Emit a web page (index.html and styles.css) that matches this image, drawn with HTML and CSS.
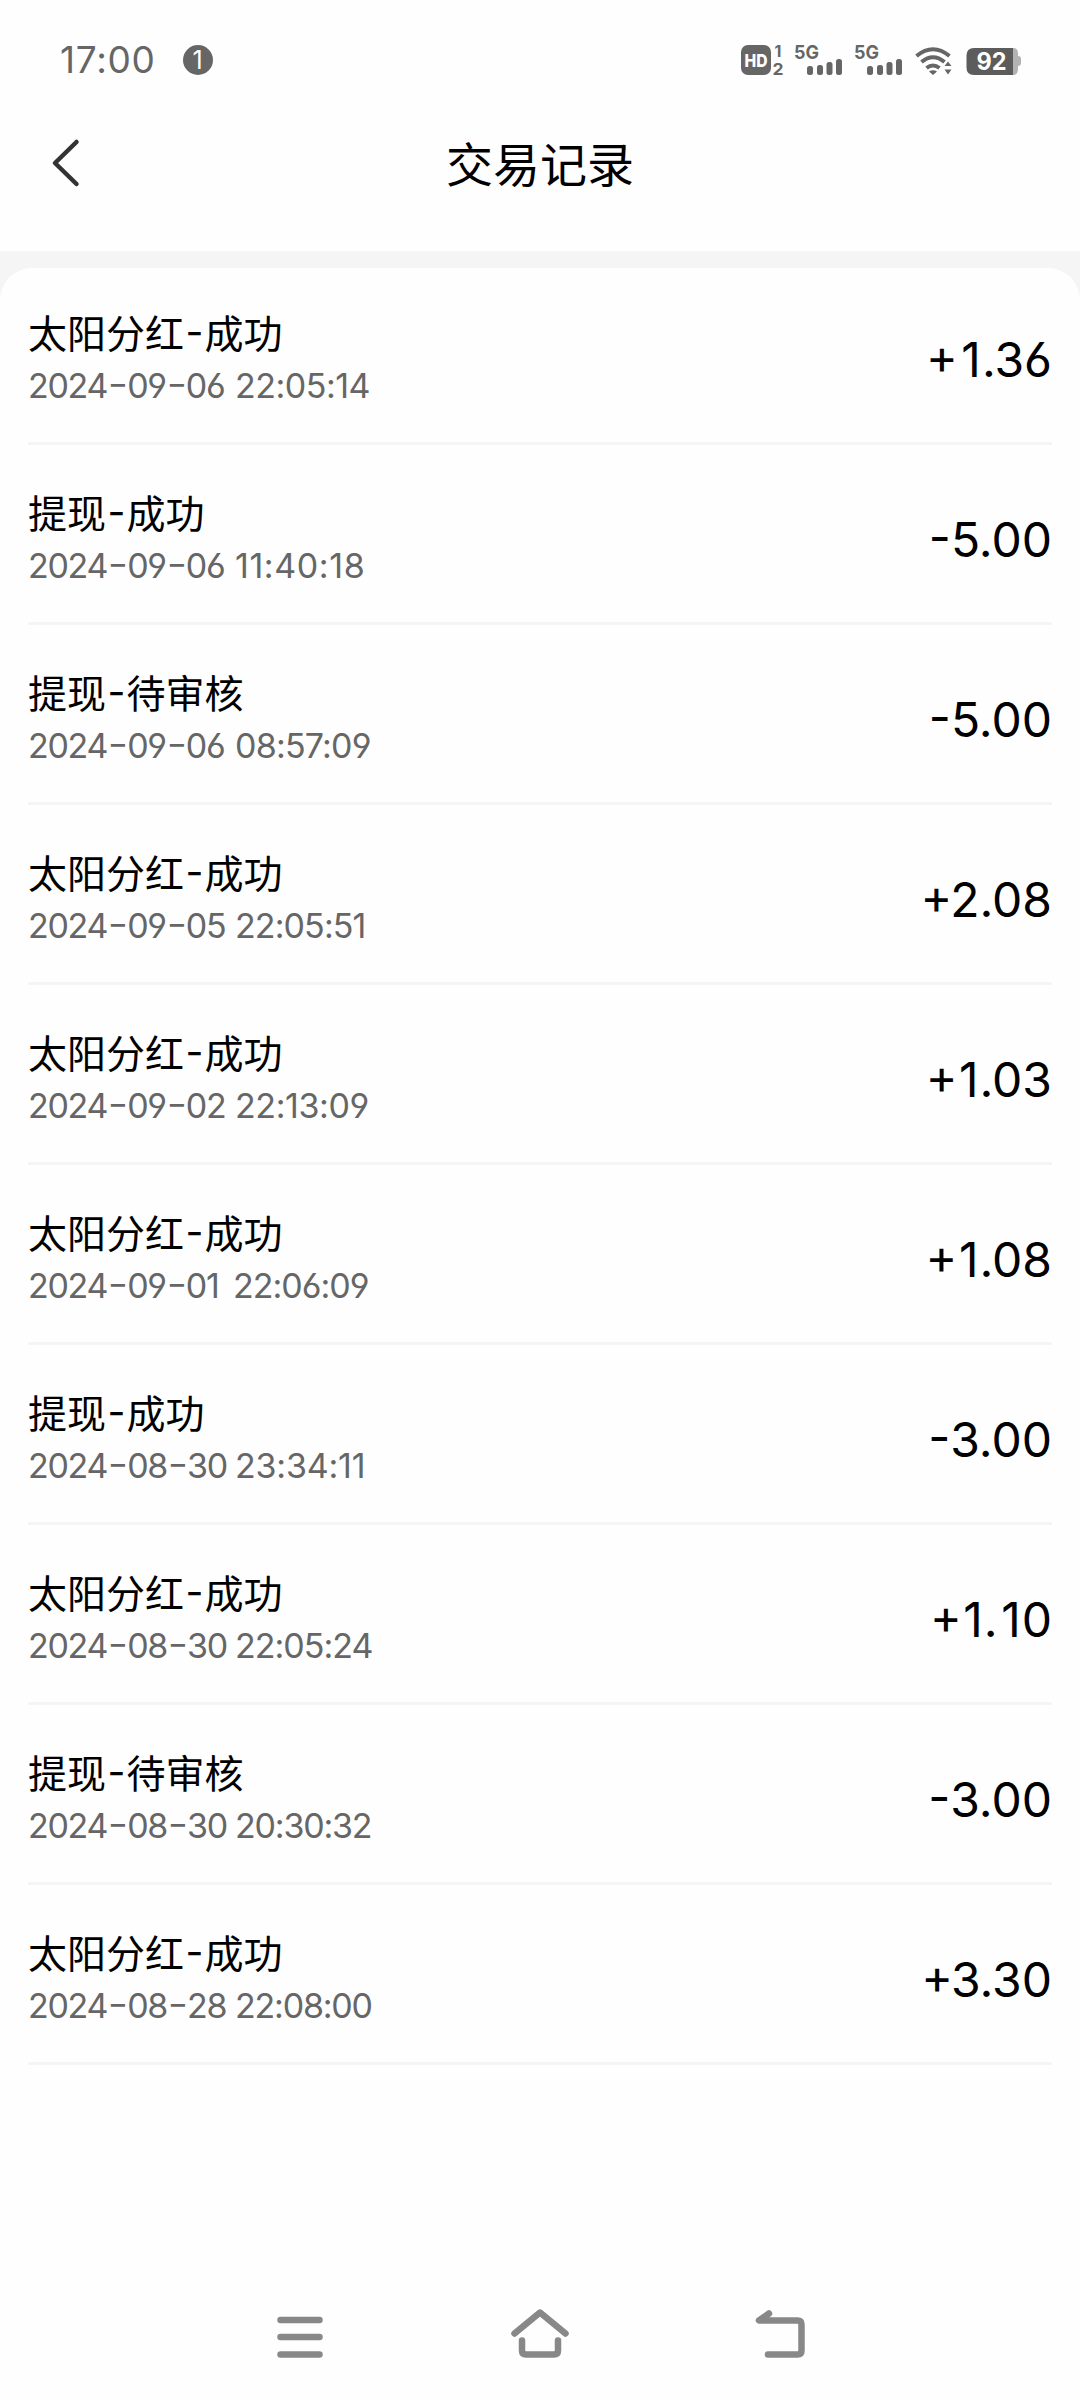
FILE: index.html
```html
<!DOCTYPE html>
<html lang="zh-CN">
<head>
<meta charset="utf-8">
<title>交易记录</title>
<link rel="stylesheet" href="styles.css">
</head>
<body>
<div class="status">
  <div class="status-left"><span class="clock">17:00</span><span class="notice">1</span></div>
  <svg class="status-icons" width="290" height="52" viewBox="0 -10 290 52">
    <g fill="#666">
      <rect x="0" y="1" width="30" height="30" rx="7"/>
      <text class="tiny" x="33.500" y="13" font-size="16">1</text>
      <text class="tiny" x="31.500" y="31" font-size="16" textLength="11" lengthAdjust="spacingAndGlyphs">2</text>
      <text class="tiny" x="53" y="15" font-size="19" textLength="25" lengthAdjust="spacingAndGlyphs">5G</text>
      <text class="tiny" x="113" y="15" font-size="19" textLength="25" lengthAdjust="spacingAndGlyphs">5G</text>
      <g id="bars"><rect x="66" y="22" width="6" height="9" rx="2.500"/><rect x="76" y="21" width="6" height="10" rx="2.500"/><rect x="85.500" y="18" width="6" height="13" rx="2.500"/><rect x="95" y="15" width="6" height="16" rx="2.500"/></g>
      <use href="#bars" x="60"/>
    </g>
    <text class="hd" x="3.500" y="22.500" font-size="18" textLength="23" lengthAdjust="spacingAndGlyphs">HD</text>
    <g fill="none" stroke="#666" stroke-width="4">
      <path d="M175.500 12Q192 -1.500 208.500 12"/><path d="M180.500 18Q192 8.500 203.500 18"/><path d="M185.500 24Q192 19 198.500 24"/>
    </g>
    <path d="M188 27.500Q192 25 196 27.500L192 31ZM203.500 22L207 17.500L210.500 22ZM203.500 25.500L207 30.500L210.500 25.500Z" fill="#666"/>
    <path d="M271 4h1q5 0 5 5v3q3 0 3 3v4q0 3-3 3v3q0 6-5 6h-2z" fill="#b3b3b3"/>
    <path d="M233 4h39v27h-39q-7.500 0-7.500-7.500v-12q0-7.500 7.500-7.500z" fill="#5c5c5c"/>
    <text class="battery" x="235.500" y="26" font-size="24" textLength="30" lengthAdjust="spacingAndGlyphs">92</text>
  </svg>
</div>
<header class="header">
  <svg class="back" width="30" height="50" viewBox="0 0 30 50"><path d="M26.500 4L5 25L26.500 46" fill="none" stroke="#333" stroke-width="4.500" stroke-linecap="round" stroke-linejoin="round"/></svg>
  <h1 class="heading">交易记录</h1>
</header>
<main class="page">
  <ul class="list">
    <li class="row"><div><p class="name">太阳分红<i>-</i>成功</p><p class="date"><span>2024<i>-</i>09<i>-</i>06</span> <span style="letter-spacing:-0.5px">22:05:14</span></p></div><b class="amount"><i class="sign">+</i><i class="one">1</i>.36</b></li>
    <li class="row"><div><p class="name">提现<i>-</i>成功</p><p class="date"><span>2024<i>-</i>09<i>-</i>06</span> <span style="letter-spacing:0.6px">11:40:18</span></p></div><b class="amount"><i class="sign">-</i>5.00</b></li>
    <li class="row"><div><p class="name">提现<i>-</i>待审核</p><p class="date"><span>2024<i>-</i>09<i>-</i>06</span> <span style="letter-spacing:-0.8px">08:57:09</span></p></div><b class="amount"><i class="sign">-</i>5.00</b></li>
    <li class="row"><div><p class="name">太阳分红<i>-</i>成功</p><p class="date"><span>2024<i>-</i>09<i>-</i>05</span> <span style="letter-spacing:-0.9px">22:05:51</span></p></div><b class="amount"><i class="sign plus">+</i>2.08</b></li>
    <li class="row"><div><p class="name">太阳分红<i>-</i>成功</p><p class="date"><span>2024<i>-</i>09<i>-</i>02</span> <span style="letter-spacing:-0.4px">22:13:09</span></p></div><b class="amount"><i class="sign plus">+</i><i class="one">1</i>.03</b></li>
    <li class="row"><div><p class="name">太阳分红<i>-</i>成功</p><p class="date early"><span>2024<i>-</i>09<i>-</i>01</span> <span style="letter-spacing:-1px">22:06:09</span></p></div><b class="amount"><i class="sign plus">+</i><i class="one">1</i>.08</b></li>
    <li class="row"><div><p class="name">提现<i>-</i>成功</p><p class="date"><span>2024<i>-</i>08<i>-</i>30</span> <span style="letter-spacing:-0.2px">23:34:11</span></p></div><b class="amount"><i class="sign">-</i>3.00</b></li>
    <li class="row"><div><p class="name">太阳分红<i>-</i>成功</p><p class="date"><span>2024<i>-</i>08<i>-</i>30</span> <span style="letter-spacing:-1px">22:05:24</span></p></div><b class="amount"><i class="sign plus">+</i><i class="one">1</i>.<i class="one">1</i>0</b></li>
    <li class="row"><div><p class="name">提现<i>-</i>待审核</p><p class="date"><span>2024<i>-</i>08<i>-</i>30</span> <span style="letter-spacing:-1.200px">20:30:32</span></p></div><b class="amount"><i class="sign">-</i>3.00</b></li>
    <li class="row"><div><p class="name">太阳分红<i>-</i>成功</p><p class="date"><span>2024<i>-</i>08<i>-</i>28</span> <span style="letter-spacing:-1.200px">22:08:00</span></p></div><b class="amount"><i class="sign plus">+</i>3.30</b></li>
  </ul>
</main>
<nav class="nav">
  <svg width="60" height="60" viewBox="0 0 60 60"><path d="M10.500 14h39M10.500 31h39M10.500 48.500h39"/></svg>
  <svg width="60" height="60" viewBox="0 0 60 60"><path d="M4.500 27.500L30 6.500L55.500 27.500M12 34.500V44.500q0 4 4 4h28q4 0 4-4V34.500"/></svg>
  <svg width="60" height="60" viewBox="0 0 60 60"><path d="M19 7.500L9 14.500H47.500q4 0 4 4v26q0 4-4 4H18"/></svg>
</nav>
</body>
</html>
```

FILE: styles.css
```css
* { box-sizing: border-box; margin: 0; padding: 0; }
body {
  width: 1080px;
  height: 2400px;
  display: flex;
  flex-direction: column;
  background: #fefefe;
  color: #000;
  font-family: Inter, "Noto Sans CJK SC", sans-serif;
  overflow: hidden;
}
i { font-style: normal; }
.status {
  height: 110px;
  padding: 10px 49px 0 60px;
  display: flex;
  align-items: center;
  justify-content: space-between;
}
.status-left { display: flex; align-items: center; gap: 27px; color: #666; }
.clock { font-size: 37px; line-height: 40px; letter-spacing: 0.7px; }
.notice {
  width: 30px;
  height: 30px;
  border-radius: 50%;
  background: #666;
  color: #fff;
  font-size: 25px;
  line-height: 30px;
  text-align: center;
}
.tiny { font-weight: 700; }
.hd { font-weight: 800; fill: #fff; }
.battery { font-weight: 700; fill: #fff; }
.header {
  height: 141px;
  padding: 0 50px 33px;
  display: grid;
  grid-template-columns: 30px 1fr 30px;
  align-items: center;
}
.back { margin-top: -2px; }
.heading {
  padding-top: 1px;
  font-size: 47px;
  line-height: 60px;
  font-weight: 400;
  text-align: center;
}
.page { flex: 1; padding-top: 17px; background: #f5f5f5; }
.list {
  height: 100%;
  padding: 0 28px;
  border-radius: 32px 32px 0 0;
  background: #fefefe;
  list-style: none;
}
.row {
  height: 180px;
  padding-top: 11px;
  border-bottom: 3px solid #f5f5f5;
  display: flex;
  align-items: center;
  justify-content: space-between;
}
.row:first-child { height: 177px; padding-top: 8px; }
.name { font-size: 39px; line-height: 54px; }
.name i {
  display: inline-block;
  margin: 0 1px 0 1.5px;
  transform: translateY(-2px);
}
.date {
  display: grid;
  grid-template-columns: 207px auto;
  font-size: 34px;
  line-height: 50px;
  color: #666;
  letter-spacing: -1.3px;
  font-feature-settings: "cv03", "cv04";
}
.date.early { grid-template-columns: 205px auto; }
.date i {
  display: inline-block;
  width: 20px;
  text-align: center;
  transform: translateY(-2px) scaleX(1.3);
}
.amount {
  padding-top: 2px;
  font-size: 48px;
  line-height: 60px;
  font-weight: 400;
  font-feature-settings: "cv03", "cv04";
}
.sign { display: inline-block; transform: translateY(-3px); }
.sign.plus { margin-right: -2px; }
.one { margin: 0 1px 0 3.5px; }
.nav {
  height: 128px;
  padding: 0 270px;
  display: flex;
  align-items: center;
  justify-content: space-between;
}
.nav svg { fill: none; stroke: #888; stroke-width: 6.5; stroke-linecap: round; stroke-linejoin: round; }
```
